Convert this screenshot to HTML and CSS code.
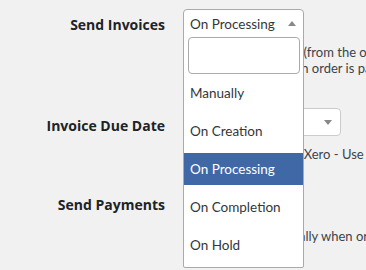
FILE: index.html
```html
<!DOCTYPE html>
<html lang="en">
<head>
  <meta charset="UTF-8">
  <meta name="viewport" content="width=device-width, initial-scale=1.0">
  <title>Xero Settings</title>
  <link rel="stylesheet" href="styles.css">
</head>
<body>
  <div class="settings">
    <div class="row row-invoices">
      <div class="label">Send Invoices</div>
      <div class="field">
        <div class="select-spacer"></div>
        <p class="desc">Send invoice to Xero (from the order status)<br>Or send later when an order is paid</p>
      </div>
    </div>

    <div class="row row-due">
      <div class="label">Invoice Due Date</div>
      <div class="field">
        <div class="select"><span class="arrow-down"></span></div>
        <p class="desc">Set an invoice due in Xero - Use</p>
      </div>
    </div>

    <div class="row row-payments">
      <div class="label">Send Payments</div>
      <div class="field">
        <div class="select-spacer"></div>
        <p class="desc">Payments automatically when order</p>
      </div>
    </div>
  </div>

  <div class="dropdown">
    <div class="dropdown-head">
      <span>On Processing</span>
      <span class="arrow-up"></span>
    </div>
    <div class="dropdown-search"><input type="text"></div>
    <ul class="options">
      <li>Manually</li>
      <li>On Creation</li>
      <li class="active">On Processing</li>
      <li>On Completion</li>
      <li>On Hold</li>
    </ul>
  </div>
</body>
</html>
```

FILE: styles.css
```css
body {
  margin: 0;
  padding: 0;
  background-color: #f1f1f1;
  font-family: Lato, "Liberation Sans", sans-serif;
  color: #32373c;
  overflow: hidden;
  position: relative;
  height: 270px;
}
.row {
  display: grid;
  grid-template-columns: 165px 1fr;
  column-gap: 18px;
}
.label {
  font-family: "Open Sans", sans-serif;
  font-weight: 700;
  font-size: 14px;
  line-height: 18px;
  color: #1d2327;
  text-align: right;
}
.field {
  min-width: 0;
}
.select {
  position: relative;
  width: 158px;
  height: 28px;
  background: #fff;
  border: 1px solid #ccc;
  border-radius: 4px;
  box-sizing: border-box;
}
.select-spacer {
  height: 28px;
}
.arrow-down {
  position: absolute;
  right: 8px;
  top: 11px;
  border-left: 4px solid transparent;
  border-right: 4px solid transparent;
  border-top: 5px solid #888;
}
.desc {
  margin: 10px 0 0;
  font-size: 13px;
  line-height: 16px;
  white-space: nowrap;
  color: #3c434a;
}

.row-invoices .label { padding-top: 16px; }
.row-invoices .select-spacer { margin-top: 9px; height: 30px; }
.row-invoices .desc { margin-top: 5px; }
.row-invoices { height: 98px; }

.row-due .label { padding-top: 19px; }
.row-due .select { margin-top: 10px; }
.row-due { height: 82px; }

.row-payments .label { padding-top: 16px; }
.row-payments .select-spacer { margin-top: 10px; }

/* open select menu, lies over the form */
.dropdown {
  position: absolute;
  left: 183px;
  top: 9px;
  width: 121px;
  height: 259px;
  box-sizing: border-box;
  background: #fff;
  border: 1px solid #aaa;
  border-radius: 4px 4px 2px 2px;
  font-size: 13.5px;
}
.dropdown-head {
  display: flex;
  justify-content: space-between;
  align-items: center;
  height: 27px;
  padding: 0 7px 0 6px;
}
.arrow-up {
  border-left: 4px solid transparent;
  border-right: 4px solid transparent;
  border-bottom: 5px solid #888;
}
.dropdown-search {
  padding: 0 3px 0 4px;
}
.dropdown-search input {
  display: block;
  width: 100%;
  height: 37px;
  box-sizing: border-box;
  border: 1px solid #aaa;
  border-radius: 4px;
  margin: 0;
}
.options {
  list-style: none;
  margin: 3px 0 0;
  padding: 0;
}
.options li {
  height: 32px;
  line-height: 32px;
  margin-bottom: 6px;
  padding-left: 6px;
}
.options li.active {
  background-color: #4068a6;
  color: #fff;
}
```
